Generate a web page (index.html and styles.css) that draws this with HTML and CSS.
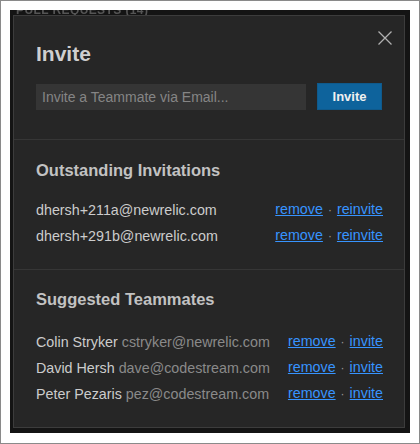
FILE: index.html
```html
<!DOCTYPE html>
<html>
<head>
<meta charset="utf-8">
<link rel="stylesheet" href="styles.css">
</head>
<body>
<div class="frame">
  <div class="panel">
    <div class="bg-title">PULL REQUESTS (14)</div>
    <div class="modal">
      <button class="close" aria-label="Close">
        <svg width="16" height="16" viewBox="0 0 16 16"><path d="M1.5 1.5 L14.5 14.5 M14.5 1.5 L1.5 14.5" stroke="#b0b0b0" stroke-width="1.3" fill="none"/></svg>
      </button>
      <section class="section top">
        <h1 class="title">Invite</h1>
        <div class="invite-row">
          <input class="email" type="text" placeholder="Invite a Teammate via Email...">
          <button class="btn">Invite</button>
        </div>
      </section>
      <section class="section outstanding">
        <h2 class="heading">Outstanding Invitations</h2>
        <div class="rows">
          <div class="row"><span class="name">dhersh+211a@newrelic.com</span><span class="links"><a href="#">remove</a><span class="dot">·</span><a href="#">reinvite</a></span></div>
          <div class="row"><span class="name">dhersh+291b@newrelic.com</span><span class="links"><a href="#">remove</a><span class="dot">·</span><a href="#">reinvite</a></span></div>
        </div>
      </section>
      <section class="section suggested">
        <h2 class="heading">Suggested Teammates</h2>
        <div class="rows">
          <div class="row"><span class="name">Colin Stryker <span class="mail">cstryker@newrelic.com</span></span><span class="links"><a href="#">remove</a><span class="dot">·</span><a href="#">invite</a></span></div>
          <div class="row"><span class="name">David Hersh <span class="mail">dave@codestream.com</span></span><span class="links"><a href="#">remove</a><span class="dot">·</span><a href="#">invite</a></span></div>
          <div class="row"><span class="name">Peter Pezaris <span class="mail">pez@codestream.com</span></span><span class="links"><a href="#">remove</a><span class="dot">·</span><a href="#">invite</a></span></div>
        </div>
      </section>
    </div>
  </div>
</div>
</body>
</html>
```
FILE: styles.css
```css
* { box-sizing: border-box; }
html, body { margin: 0; padding: 0; background: #fff; }
body { font-family: "Liberation Sans", Arial, sans-serif; }

.frame {
  width: 420px;
  height: 444px;
  border: 1px solid #8a8a8a;
  padding: 9px 9px 10px 9px;
  background: #fff;
}

.panel {
  position: relative;
  width: 100%;
  height: 100%;
  background: #141414;
  overflow: hidden;
}

.bg-title {
  margin: -6px 0 0 6px;
  height: 11px;
  font-size: 12px;
  line-height: 12px;
  font-weight: bold;
  letter-spacing: 0.4px;
  color: #555;
  filter: blur(0.6px);
  white-space: nowrap;
}

.modal {
  position: absolute;
  left: 3px;
  top: 5px;
  right: 5px;
  bottom: 5px;
  background: #262626;
  border: 1px solid #3c3c3c;
  display: flex;
  flex-direction: column;
}

.close {
  position: absolute;
  top: 14px;
  right: 11px;
  width: 16px;
  height: 16px;
  padding: 0;
  border: 0;
  background: none;
  display: flex;
}

.section {
  padding: 0 21px 0 22px;
  border-bottom: 1px solid #363636;
}
.section.top { padding-top: 26px; padding-bottom: 29px; }
.section.suggested { border-bottom: 0; }

.title {
  margin: 0 0 17px 0;
  font-size: 21px;
  line-height: 24px;
  font-weight: bold;
  color: #cfcfcf;
}

.invite-row {
  display: flex;
  gap: 11px;
  align-items: center;
}

.email {
  width: 270px;
  height: 26px;
  border: 0;
  outline: 0;
  padding: 0 6px;
  background: #353535;
  color: #ccc;
  font-family: inherit;
  font-size: 14px;
}
.email::placeholder { color: #858585; }

.btn {
  width: 65px;
  height: 27px;
  border: 1px solid #0f5a8c;
  background: #0e639c;
  color: #f0f0f0;
  font-family: inherit;
  font-size: 13px;
  font-weight: bold;
  padding: 0;
}

.heading {
  font-size: 16.5px;
  line-height: 20px;
  font-weight: bold;
  color: #c2c2c2;
}
.outstanding .heading { margin: 20px 0 20px 0; }
.suggested .heading { margin: 19px 0 23px 0; }

.rows {
  display: flex;
  flex-direction: column;
  gap: 7px;
  padding-bottom: 24px;
}

.row {
  display: flex;
  justify-content: space-between;
  align-items: center;
  font-size: 14.3px;
  line-height: 18px;
  color: #cccccc;
}

.mail { color: #8a8a8a; }

.links a {
  color: #3794ff;
  text-decoration: underline;
}
.dot {
  color: #999;
  margin: 0 5px;
  font-size: 12px;
}
```
